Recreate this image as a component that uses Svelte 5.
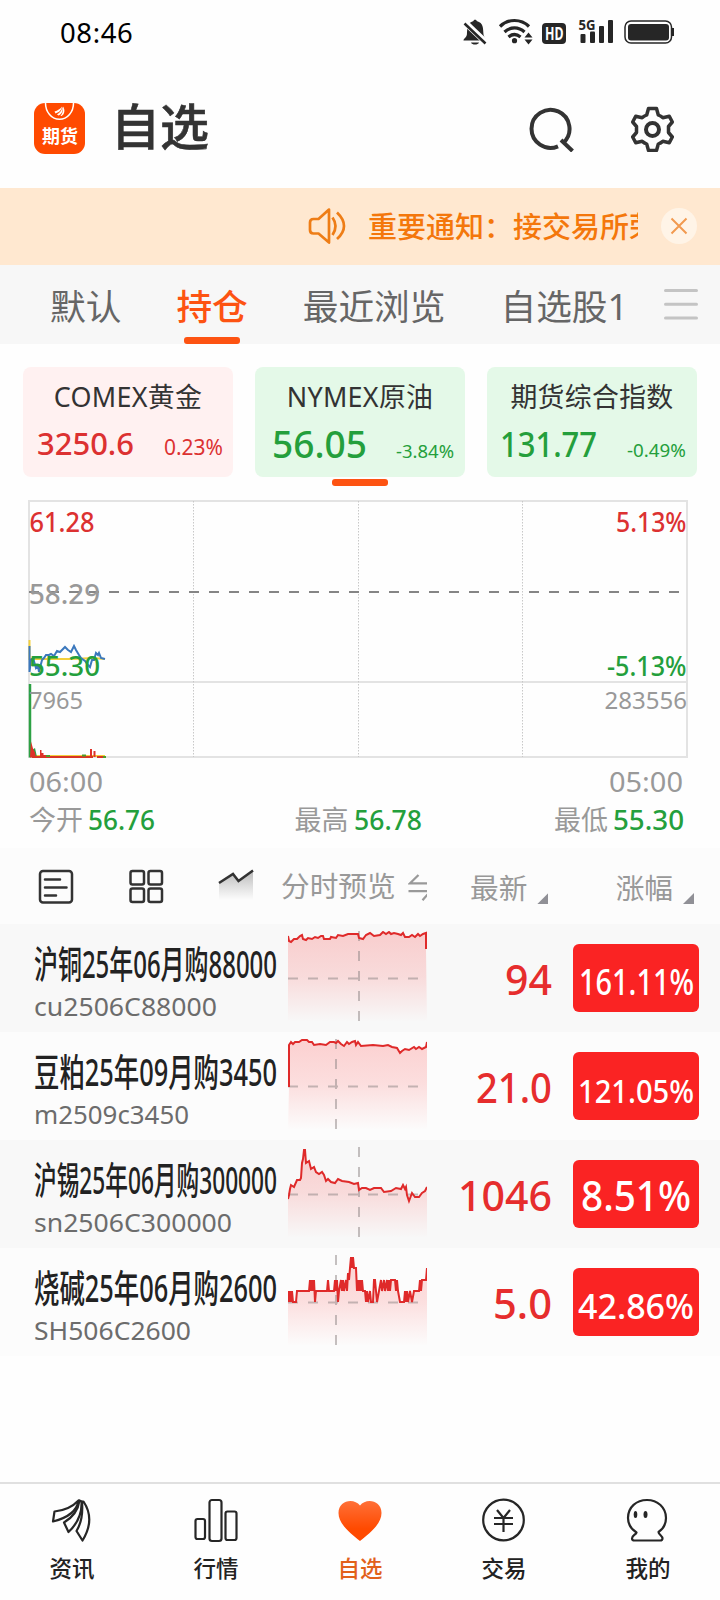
<script>
  const tabs = ['默认', '持仓', '最近浏览', '自选股1']
  let activeTab = $state(1)

  const cards = [
    { name: 'COMEX黄金', value: '3250.6', vw: 97, vs: 31, vy: 32, pct: '0.23%', pw: 59, ps: 21, py: 32, up: true, left: 14 },
    { name: 'NYMEX原油', value: '56.05', vw: 95, vs: 37.5, vy: 35, pct: '-3.84%', pw: 58, ps: 18, py: 34.5, up: false, left: 17 },
    { name: '期货综合指数', value: '131.77', vw: 97, vs: 35, vy: 34, pct: '-0.49%', pw: 59, ps: 18, py: 33.5, up: false, left: 13 },
  ]

  const rows = [
    {
      name: '沪铜25年06月购88000', code: 'cu2506C88000', cw: 183, price: '94', w: 47, pct: '161.11%', pw: 115, ps: 36.5, mid: 71,
      line: '0,5 1,10 3,11 6,8 9,8 12,5 14,4 15,8 18,9 20,7 24,8 27,6 30,7 33,5 35,5 36,8 42,8 43,6 48,7 50,4 55,5 60,3 70,3 71,7 75,8 78,4 82,2 86,5 92,4 95,1 98,3 101,1 103,3 106,2 110,3 113,4 115,2 117,6 121,6 124,4 127,6 130,3 132,5 135,3 138,2 138,18',
    },
    {
      name: '豆粕25年09月购3450', code: 'm2509c3450', cw: 155, price: '21.0', w: 76, pct: '121.05%', pw: 116, ps: 32, mid: 48,
      line: '1,48 1,6 3,3 5,5 7,3 11,3 14,1 19,1 21,3 24,3 26,6 32,5 38,6 42,3 46,3 48,4 50,2 53,5 56,7 59,3 61,5 64,3 67,2 68,6 70,3 73,7 85,6 95,7 100,6 104,8 109,9 112,14 114,12 117,10 121,11 126,8 128,10 131,8 134,10 138,8 139,3',
    },
    {
      name: '沪锡25年06月购300000', code: 'sn2506C300000', cw: 198, price: '1046', w: 94, pct: '8.51%', pw: 110, ps: 41.5, mid: 71,
      line: '0,52 1,48 2,42 3,38 6,40 9,33 12,33 13,31 14,16 15,12 16,3 17,3 18,16 21,14 23,22 26,20 28,25 31,27 34,25 36,28 38,34 40,32 43,35 47,36 50,32 54,34 61,35 66,37 70,36 71,43 74,41 78,41 82,43 86,41 93,41 96,45 103,44 108,41 113,42 115,38 117,42 118,40 119,48 121,54 124,46 127,50 131,50 134,46 137,44 139,40',
    },
    {
      name: '烧碱25年06月购2600', code: 'SH506C2600', cw: 157, price: '5.0', w: 59, pct: '42.86%', pw: 116, ps: 33.5, mid: 48,
      line: '0,36 1,47 2,36 3,47 4,36 5,47 8,47 9,36 21,36 22,25 23,36 24,25 25,36 26,25 27,47 28,36 39,36 40,25 41,36 46,36 47,25 48,36 49,25 50,47 51,36 53,25 54,36 55,25 56,36 58,25 59,36 60,18 61,25 62,13 63,2 64,13 65,2 66,13 68,13 69,36 70,25 71,36 72,25 73,36 74,25 75,36 77,36 78,47 79,36 80,47 82,36 83,47 85,47 86,25 87,25 89,47 91,36 93,25 94,36 96,25 97,36 99,25 100,36 101,25 102,36 103,25 107,25 108,36 109,25 110,36 112,47 116,47 117,36 118,47 119,36 120,47 122,36 124,47 126,36 131,36 132,25 133,36 134,25 138,25 139,13',
    },
  ]

  const quotes = [
    ['今开', '56.76', 67],
    ['最高', '56.78', 68],
    ['最低', '55.30', 71],
  ]

  const nav = ['资讯', '行情', '自选', '交易', '我的']
</script>

<!-- one line of text squeezed or stretched to a set width -->
{#snippet fit(text, width, size, base, height)}
  <svg class="fit" {width} {height}>
    <text x="0" y={base} font-size={size} textLength={width} lengthAdjust="spacingAndGlyphs">{text}</text>
  </svg>
{/snippet}

<div class="screen">
  <div class="status">
    <span class="clock">08:46</span>
    <svg width="214" height="34" viewBox="460 15 214 34">
      <g fill="#262626">
        <path d="M463.5 40.5c0-2 3-3 3.400-6 .5-6-.2-11.500 6.600-13.500 0-1.600 3.200-1.600 3.200 0 7 2 6.300 7.500 6.800 13.500.4 3 3 4 3 6z" />
        <path d="M471 42.500h8c-1 2.700-7 2.700-8 0z" />
      </g>
      <path d="M464.500 22L486 42.500" stroke="#fff" stroke-width="6" />
      <path d="M464.500 23.500L485.500 43.500" stroke="#262626" stroke-width="2.500" />
      <g fill="none" stroke="#262626" stroke-width="3.200">
        <path d="M500 26.500c8-8 21-8 29 0" />
        <path d="M504.500 32c6-5.500 14-5.500 20 0" />
        <path d="M508.500 37c4-3.300 8-3.300 12 0" />
      </g>
      <circle cx="514.500" cy="40.700" r="2.600" fill="#262626" />
      <path d="M524.500 37.500l4-5 4 5zM524.500 39.500l4 5 4-5z" fill="#262626" />
      <rect x="542" y="23" width="24" height="21" rx="4" fill="#262626" />
      <text x="545" y="39.500" font-size="17.500" font-weight="700" fill="#fff" textLength="18.500" lengthAdjust="spacingAndGlyphs">HD</text>
      <text x="578.500" y="30" font-size="15" font-weight="700" fill="#262626" textLength="17" lengthAdjust="spacingAndGlyphs">5G</text>
      <g fill="#262626">
        <rect x="580.500" y="34" width="5" height="9" rx="1" />
        <rect x="590" y="31.500" width="5" height="11.500" rx="1" />
        <rect x="599" y="26" width="5" height="17" rx="1" />
        <rect x="608" y="20" width="5" height="23" rx="1" />
        <rect x="628" y="24" width="41" height="16.500" rx="3" />
        <rect x="672" y="28" width="2" height="8" />
      </g>
      <rect x="625" y="21" width="46.500" height="22" rx="6" fill="none" stroke="#262626" stroke-width="1.500" />
    </svg>
  </div>

  <header>
    <svg class="logo" width="51" height="51" viewBox="0 0 51 51">
      <rect width="51" height="51" rx="11" fill="#ff4a00" />
      <path d="M11.500 0c0 9 6 16.300 14 16.300S39.500 9 39.500 0" fill="none" stroke="#fff" stroke-width="1.500" />
      <path d="M20.500 8.500c3-1 6-2.500 7.500-5-.5 4-3.500 6-6.500 7zM23 11.500c3-1.500 5-4.500 5.500-8 1 4-1 8-4 9zM26.500 13c2-2.500 3-5.500 2.500-9.500 2.500 3.500 1.500 8-1.500 9.500z" fill="#fff" />
      <text x="8" y="39.500" font-size="18.500" font-weight="700" fill="#fff" textLength="36" lengthAdjust="spacingAndGlyphs">期货</text>
    </svg>
    <h1>自选</h1>
    <svg width="46" height="46" viewBox="528 106 46 46" fill="none" stroke="#333" stroke-width="4">
      <path d="M558 146.300A19 19 0 1 1 563.400 142.800" />
      <path d="M561 140l11.500 11" stroke-width="4" />
    </svg>
    <svg width="46" height="46" viewBox="629 106 46 46" fill="none" stroke="#333">
      <path d="M648.500 108.500h8l1.800 6.500q2.500 1 4.500 2.700l6.500-1.400 3 5.700-3.800 4.500v6l3.800 4.500-3 5.700-6.500-1.400q-2 1.700-4.500 2.700l-1.800 6.500h-8l-1.800-6.500q-2.500-1-4.500-2.700l-6.500 1.400-3-5.700 3.800-4.500v-6l-3.800-4.500 3-5.700 6.500 1.400q2-1.700 4.500-2.700z" stroke-width="3.500" stroke-linejoin="round" />
      <circle cx="652.500" cy="129.500" r="6.500" stroke-width="4" />
    </svg>
  </header>

  <div class="notice">
    <svg width="40" height="40" viewBox="308 206 40 40" fill="none" stroke="#ee7d16" stroke-width="2.700" stroke-linejoin="round">
      <path d="M329 209.500L318.500 219h-5q-3.500 0-3.500 3.500v7.500q0 3.500 3.500 3.500h5l10.500 9z" />
      <path d="M332.500 217.500q6 8.500 0 17.500M337 212.500q14 13.500 0 26.500" />
    </svg>
    <div class="ticker">重要通知：接交易所荣</div>
    <button class="close" aria-label="关闭">
      <svg width="36" height="36" viewBox="0 0 36 36">
        <path d="M10.500 10.500l15 15M25.500 10.500l-15 15" stroke="#f29a50" stroke-width="2" />
      </svg>
    </button>
  </div>

  <div class="tabs">
    {#each tabs as tab, i}
      <button class="tab" class:active={i === activeTab} onclick={() => (activeTab = i)}>{tab}</button>
    {/each}
    <svg class="menu" width="34" height="31" viewBox="0 0 34 31" stroke="#c4c4c4" stroke-width="3" stroke-linecap="round">
      <path d="M1.500 1.500h31M1.500 15.200h31M1.500 28.900h31" />
    </svg>
  </div>

  <div class="cards">
    {#each cards as card}
      <div class="card" class:up={card.up}>
        <div class="card-name">{card.name}</div>
        <div class="card-nums" style:padding-left="{card.left}px">
          <span class="medium">{@render fit(card.value, card.vw, card.vs, card.vy, 44)}</span>
          {@render fit(card.pct, card.pw, card.ps, card.py, 44)}
        </div>
      </div>
    {/each}
  </div>
  <div class="pager"></div>

  <svg class="chart" width="720" height="304" viewBox="0 490 720 304">
    <g fill="none" stroke="#e3e3e3" stroke-width="2">
      <rect x="29" y="501" width="658" height="256" />
      <path d="M29 682h658" />
    </g>
    <path d="M193.500 501v256M358.500 501v256M522.500 501v256" stroke="#c8c8c8" stroke-dasharray="1.500 1.500" />
    <path d="M29 592h650" stroke="#858585" stroke-width="2" stroke-dasharray="10 10" />
    <path d="M29.500 640v19h42l22-1 11 1" fill="none" stroke="#f3cf3c" stroke-width="2" />
    <polyline fill="none" stroke="#3b78bd" stroke-width="2" points="29.500,646 29.500,672 31,660 33,658 36,668 38,666 39,672 42,660 44,658 46,655 49,655 51,654 54,656 57,651 60,652 63,649 65,647 68,650 71,652 74,646 76,650 79,655 81,658 85,661 88,665 90,667 92,660 94,660 96,653 98,655 99,653 101,658 105,659" />
    <path d="M33 756h72" stroke="#f3cf3c" stroke-width="2" />
    <path d="M30 684v73.500" stroke="#2ca144" stroke-width="2.500" />
    <path d="M29 757v-22l3 15 3-2 2 9z" fill="#2ca144" />
    <path d="M30 757.500l1-16 2 7 2 4 1 5zM40 757v-7h1.500v3h2v2h3v2zM90 757v-8h2v8M93.500 757v-6h2v6z" fill="#df3028" />
    <path d="M32 757h61M97 757h6" stroke="#d83424" stroke-width="2" />
    <path d="M46 756h4M82 755.500h4M103 757h3" stroke="#4f9c2a" stroke-width="2" />
    <g font-size="27" font-weight="500">
      <text x="29.500" y="531.500" fill="#dc3131" textLength="65" lengthAdjust="spacingAndGlyphs">61.28</text>
      <text x="29" y="603.500" fill="#999" textLength="71" lengthAdjust="spacingAndGlyphs">58.29</text>
      <text x="29" y="675.500" fill="#249f3c" textLength="71" lengthAdjust="spacingAndGlyphs">55.30</text>
      <text x="616" y="531.500" fill="#dc3131" textLength="70.500" lengthAdjust="spacingAndGlyphs">5.13%</text>
      <text x="607" y="675.500" fill="#249f3c" textLength="79.500" lengthAdjust="spacingAndGlyphs">-5.13%</text>
    </g>
    <g font-size="24" fill="#999">
      <text x="29" y="708.500" textLength="54" lengthAdjust="spacingAndGlyphs">7965</text>
      <text x="604.500" y="708.500" textLength="82.500" lengthAdjust="spacingAndGlyphs">283556</text>
    </g>
    <g font-size="28" fill="#999">
      <text x="29" y="791.500" textLength="74" lengthAdjust="spacingAndGlyphs">06:00</text>
      <text x="609" y="791.500" textLength="74" lengthAdjust="spacingAndGlyphs">05:00</text>
    </g>
  </svg>
  <div class="quotes">
    {#each quotes as [label, value, w]}
      <div class="quote">{label}<span class="medium down">{@render fit(value, w, 27, 35.5, 52)}</span></div>
    {/each}
  </div>

  <div class="thead">
    <svg width="224" height="76" viewBox="34 848 224 76" fill="none" stroke="#333" stroke-width="2.500">
      <rect x="40" y="871" width="32" height="31.500" rx="3" />
      <path d="M45 879.500h15M45 887.500h21.500M45 895.500h11" stroke-linecap="round" />
      <rect x="130.500" y="871" width="13.500" height="13.500" rx="2" />
      <rect x="148.500" y="871" width="13.500" height="13.500" rx="2" />
      <rect x="130.500" y="888.500" width="13.500" height="13.500" rx="2" />
      <rect x="148.500" y="888.500" width="13.500" height="13.500" rx="2" />
      <defs>
        <linearGradient id="mini" x1="0" y1="0" x2="0" y2="1">
          <stop offset="0" stop-color="#888" stop-opacity=".6" />
          <stop offset="1" stop-color="#999" stop-opacity="0" />
        </linearGradient>
      </defs>
      <path d="M219 883l14-9 5.500 7 14.500-11v30h-34z" fill="url(#mini)" stroke="none" />
      <path d="M219 883l14-9 5.500 7 14.500-10.500" />
    </svg>
    <div class="preview">
      分时预览
      <svg width="19" height="28" viewBox="408 873 19 28" fill="none" stroke="#999" stroke-width="2.300">
        <path d="M418.500 875l-8.500 8.300h18M408.500 891.200h22l-8 9" />
      </svg>
    </div>
    <div class="col latest">最新<i></i></div>
    <div class="col change">涨幅<i></i></div>
  </div>

  {#each rows as row, i}
    <div class="row" class:odd={i % 2 === 0}>
      <div class="names">
        <div class="name">{@render fit(row.name, 243, 37.5, 54, 64)}</div>
        <div class="code">{@render fit(row.code, row.cw, 25, 27.8, 40)}</div>
      </div>
      <svg class="spark" width="139" height="92" viewBox="0 0 139 92">
        <defs>
          <linearGradient id="fade" gradientUnits="userSpaceOnUse" x1="0" y1="0" x2="0" y2="91">
            <stop offset="0" stop-color="#fa3535" stop-opacity=".22" />
            <stop offset=".5" stop-color="#fa3535" stop-opacity=".15" />
            <stop offset="1" stop-color="#fa3535" stop-opacity="0" />
          </linearGradient>
        </defs>
        <polygon points="0,91 {row.line} 139,91" fill="url(#fade)" />
        <path d="M0 47.500h139M{row.mid} 0v90" stroke="#8c8484" stroke-opacity=".5" stroke-width="2" stroke-dasharray="10 10" />
        <polyline points={row.line} fill="none" stroke="#df2a2a" stroke-width="2" />
      </svg>
      <div class="price">{@render fit(row.price, row.w, 41.5, 71, 108)}</div>
      <div class="badge">{@render fit(row.pct, row.pw, row.ps, 51, 68)}</div>
    </div>
  {/each}

  <nav>
    {#each nav as item, i}
      <button class="nav-item" class:on={i === 2}>
        <svg width="48" height="46" viewBox="0 0 48 46" fill="none" stroke="#262626" stroke-width="2.200" stroke-linejoin="round">
          {#if i === 0}
            <path d="M5 24.500l1.500-10q15-1.500 24-11-2 15-25.500 21z" />
            <path d="M31.500 3.500q-2 14-15.500 22l4.500 9.500q14-13 13-30.500z" />
            <path d="M34 4.500q1.500 18-5.500 29.500l6 9.500q13-21 1-39z" />
          {:else if i === 1}
            <rect x="3.500" y="22" width="9.500" height="20" rx="2" />
            <rect x="17.500" y="3" width="12" height="41" rx="2.500" />
            <rect x="33.500" y="14.500" width="11" height="28.500" rx="2" />
          {:else if i === 2}
            <defs>
              <linearGradient id="heart" x1="0" y1="0" x2="0" y2="1">
                <stop offset="0" stop-color="#ff7038" />
                <stop offset=".7" stop-color="#ff4a00" />
              </linearGradient>
            </defs>
            <path d="M24 44C15 37 2.500 27 2.500 16 2.500 3 18 .5 24 8.500 30 .5 45.500 3 45.500 16c0 11-12.500 21-21.500 28z" fill="url(#heart)" stroke="none" />
          {:else if i === 3}
            <circle cx="23.500" cy="23" r="20.300" />
            <path d="M17 13l6.500 8 6.500-8M23.500 21v14M14 21h19M14 27h19" />
          {:else}
            <path d="M12.500 35.500C7 32 4 27 4 21 4 10 12.500 3 23 3s19 7.500 19 18c0 6-3 11-7.500 14 0 2.500 4 3.500 4 6.500 0 1.500-1 2-2.500 2h-25.500c-1.500 0-2.500-.5-2.500-2 0-3 3.500-3.500 4.500-6z" />
            <ellipse cx="11.500" cy="17.500" rx="1.800" ry="3.500" fill="#262626" stroke="none" />
            <ellipse cx="21.500" cy="17.500" rx="2" ry="3.500" fill="#262626" stroke="none" />
          {/if}
        </svg>
        {item}
      </button>
    {/each}
  </nav>
</div>

<style>
  :global(body) {
    background: #fff;
  }

  .screen {
    width: 720px;
    height: 1600px;
    overflow: hidden;
    display: flex;
    flex-direction: column;
    background: #fefefe;
    color: #333;
    font-family: 'Noto Sans', 'Noto Sans CJK SC', sans-serif;
  }

  svg {
    display: block;
    flex: none;
  }

  button {
    padding: 0;
    border: 0;
    background: none;
    font-family: inherit;
    cursor: pointer;
  }

  .fit,
  .chart {
    overflow: visible;
  }

  .fit {
    fill: currentColor;
  }

  .medium {
    font-weight: 500;
  }

  .status {
    height: 66px;
    box-sizing: border-box;
    padding: 15px 46px 0 60px;
    display: flex;
    justify-content: space-between;
  }

  .clock {
    font-size: 27.5px;
    line-height: 36px;
    color: #000;
    letter-spacing: 0.6px;
  }

  header {
    height: 122px;
    box-sizing: border-box;
    padding: 3px 45px 0 34px;
    display: flex;
    align-items: center;
  }

  h1 {
    flex: 1;
    margin: 0 0 10px 26px;
    font-size: 49px;
    font-weight: 500;
    line-height: 60px;
    font-family: 'Noto Sans CJK SC', sans-serif;
    -webkit-text-stroke: 0.6px #333;
  }

  header svg:last-child {
    margin-left: 55px;
  }

  .notice {
    height: 77px;
    box-sizing: border-box;
    padding: 0 0 1px 308px;
    display: flex;
    align-items: center;
    background: #ffe8d0;
  }

  .ticker {
    width: 270px;
    margin: 0 0 3px 20px;
    overflow: hidden;
    white-space: nowrap;
    font: 500 29px/60px 'Noto Sans CJK SC', sans-serif;
    color: #f4770b;
  }

  .close {
    width: 36px;
    height: 36px;
    margin-left: 23px;
    border-radius: 50%;
    background: #fff4e7;
  }

  .tabs {
    height: 79px;
    box-sizing: border-box;
    padding: 0 22px 0 50px;
    display: flex;
    gap: 55px;
    background: #f7f7f7;
  }

  .tab {
    height: 79px;
    display: flex;
    flex-direction: column;
    align-items: center;
    font-size: 35.7px;
    line-height: 82px;
    white-space: nowrap;
    color: #666;
  }

  .tab.active {
    font-weight: 500;
    color: #fd5312;
  }

  .tab.active::after {
    content: '';
    width: 56px;
    height: 7px;
    flex: none;
    margin-top: -10px;
    border-radius: 3px;
    background: #fd5312;
  }

  .menu {
    margin: 24px 0 0 -19px;
  }

  .cards {
    padding: 23px 23px 0;
    display: flex;
    gap: 22px;
  }

  .card {
    width: 210px;
    height: 110px;
    border-radius: 8px;
    background: #e4f9e8;
  }

  .card.up {
    background: #fff1f1;
  }

  .card-name {
    height: 56px;
    font-size: 26.9px;
    line-height: 59px;
    letter-spacing: 0.3px;
    text-align: center;
  }

  .card-nums {
    display: flex;
    justify-content: space-between;
    padding-right: 11px;
    color: #249f3c;
  }

  .card.up .card-nums {
    padding-right: 10px;
    color: #dc3131;
  }

  .pager {
    width: 56px;
    height: 7px;
    margin: 2px auto 4px;
    border-radius: 3px;
    background: #fd5312;
  }

  .quotes {
    height: 54px;
    box-sizing: border-box;
    padding: 0 36px 0 29px;
    display: flex;
    justify-content: space-between;
    color: #999;
    font-size: 27px;
    line-height: 51px;
  }

  .quote {
    display: flex;
    gap: 5px;
  }

  .quote:nth-child(2) {
    margin-left: 7px;
  }

  .down {
    color: #249f3c;
  }

  .thead {
    height: 76px;
    box-sizing: border-box;
    padding: 0 26px 0 34px;
    display: flex;
    background: #fcfcfc;
    color: #999;
    font-size: 28.7px;
    line-height: 80px;
  }

  .preview {
    width: 146px;
    margin-left: 23px;
    display: flex;
    gap: 12px;
    align-items: center;
    overflow: hidden;
    white-space: nowrap;
  }

  .preview svg {
    margin-bottom: -1px;
  }

  .col {
    display: flex;
    gap: 10px;
  }

  .col i {
    width: 11px;
    height: 11px;
    margin-top: 45px;
    background: #909096;
    clip-path: polygon(100% 0, 100% 100%, 0 100%);
  }

  .latest {
    margin-left: 43px;
  }

  .change {
    margin-left: auto;
  }

  .row {
    height: 108px;
    box-sizing: border-box;
    padding: 0 21px 0 34px;
    display: flex;
    background: #fcfcfc;
  }

  .row.odd {
    background: #f8f8f8;
  }

  .names {
    width: 254px;
  }

  .name {
    color: #222;
    font-weight: 500;
  }

  .code {
    color: #6c6c6c;
  }

  .spark {
    margin-top: 7px;
  }

  .price {
    width: 125px;
    display: flex;
    justify-content: flex-end;
    color: #e62d2d;
    font-weight: 500;
  }

  .badge {
    width: 126px;
    height: 68px;
    margin: 20px 0 0 auto;
    display: flex;
    justify-content: center;
    border-radius: 6px;
    background: #fa2323;
    color: #fff;
    font-weight: 500;
  }

  nav {
    height: 118px;
    margin-top: auto;
    box-sizing: border-box;
    padding-top: 13px;
    display: flex;
    border-top: 2px solid #e0e0e0;
  }

  .nav-item {
    flex: 1;
    display: flex;
    flex-direction: column;
    align-items: center;
    font-size: 22.5px;
    line-height: 51px;
    font-weight: 500;
    color: #222;
  }

  .nav-item.on {
    color: #e2611a;
  }
</style>
